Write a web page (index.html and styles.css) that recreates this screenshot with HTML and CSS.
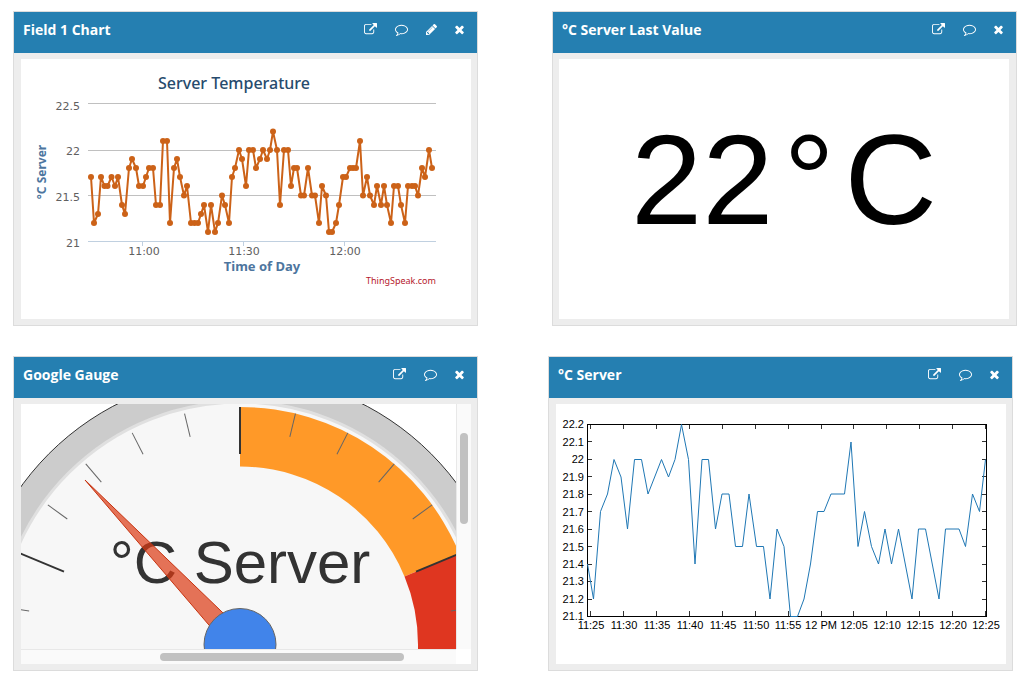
FILE: index.html
```html
<!DOCTYPE html>
<html lang="en">
<head>
<meta charset="utf-8">
<title>Server Temperature Channel</title>
<link rel="stylesheet" href="styles.css">
</head>
<body>
<svg class="sprite" aria-hidden="true">
  <symbol id="external" viewBox="0 0 1792 1792"><path d="M1408 928v320q0 119-84.5 203.5t-203.5 84.5h-832q-119 0-203.5-84.5t-84.5-203.5v-832q0-119 84.5-203.5t203.5-84.5h704q14 0 23 9t9 23v64q0 14-9 23t-23 9h-704q-66 0-113 47t-47 113v832q0 66 47 113t113 47h832q66 0 113-47t47-113v-320q0-14 9-23t23-9h64q14 0 23 9t9 23zm384-864v512q0 26-19 45t-45 19-45-19l-176-176-652 652q-10 10-23 10t-23-10l-114-114q-10-10-10-23t10-23l652-652-176-176q-19-19-19-45t19-45 45-19h512q26 0 45 19t19 45z"/></symbol>
  <symbol id="comment" viewBox="0 0 1792 1792"><path d="M896 384q-204 0-381.5 69.5t-282 187.5-104.5 255q0 112 71.5 213.5t201.5 175.5l87 50-27 96q-24 91-70 172 152-63 275-171l43-38 57 6q69 8 130 8 204 0 381.5-69.5t282-187.5 104.5-255-104.5-255-282-187.5-381.5-69.5zm896 512q0 174-120 321.5t-326 233-450 85.5q-70 0-145-8-198 175-460 242-49 14-114 22h-5q-15 0-27-10.5t-16-27.5v-1q-3-4-.5-12t2-10 4.5-9.5l6-9 7-8.5 8-9q7-8 31-34.5t34.5-38 31-39.5 32.5-51 27-59 26-76q-157-89-247.5-220t-90.5-281q0-174 120-321.5t326-233 450-85.5 450 85.5 326 233 120 321.5z"/></symbol>
  <symbol id="pencil" viewBox="128 0 1515 1792"><path d="M491 1536l91-91-235-235-91 91v107h128v128h107zm523-928q0-22-22-22-10 0-17 7l-542 542q-7 7-7 17 0 22 22 22 10 0 17-7l542-542q7-7 7-17zm-54-192l416 416-832 832h-416v-416zm683 96q0 53-37 90l-166 166-416-416 166-165q36-38 90-38 53 0 91 38l235 234q37 39 37 91z"/></symbol>
  <symbol id="close" viewBox="302 0 1188 1792"><path d="M1490 1322q0 40-28 68l-136 136q-28 28-68 28t-68-28l-294-294-294 294q-28 28-68 28t-68-28l-136-136q-28-28-28-68t28-68l294-294-294-294q-28-28-28-68t28-68l136-136q28-28 68-28t68 28l294 294 294-294q28-28 68-28t68 28l136 136q28 28 28 68t-28 68l-294 294 294 294q28 28 28 68z"/></symbol>
</svg>
<main class="board">
  <div class="row">
    <section class="panel">
      <header class="panel-head">
        <h2 class="panel-title">Field 1 Chart</h2>
        <button class="tool" type="button" aria-label="Open in new window"><svg class="icon"><use href="#external"/></svg></button>
        <button class="tool" type="button" aria-label="Comment"><svg class="icon"><use href="#comment"/></svg></button>
        <button class="tool" type="button" aria-label="Edit"><svg class="icon icon-pencil"><use href="#pencil"/></svg></button>
        <button class="tool" type="button" aria-label="Close"><svg class="icon icon-close"><use href="#close"/></svg></button>
      </header>
      <div class="panel-body">
        <svg class="chart field-chart" viewBox="0 0 450 260">
          <defs><marker id="dot" markerUnits="userSpaceOnUse" markerWidth="8" markerHeight="8" refX="4" refY="4"><circle cx="4" cy="4" r="3" fill="#cc6218"/></marker></defs>
          <text class="chart-title" x="213" y="30" text-anchor="middle">Server Temperature</text>
          <path class="grid-line" d="M67 44.5H415M67 91.5H415M67 136.5H415"/>
          <path class="axis-line" d="M67 182.5H415M121.500 182V187M222.500 182V187M323.500 182V187"/>
          <g class="tick-label" text-anchor="end">
            <text x="59" y="51">22.5</text><text x="59" y="96">22</text><text x="59" y="142">21.5</text><text x="59" y="188">21</text>
          </g>
          <g class="tick-label" text-anchor="middle">
            <text x="123" y="196">11:00</text><text x="223" y="196">11:30</text><text x="324" y="196">12:00</text>
          </g>
          <text class="axis-title" transform="translate(25 113) rotate(-90)" text-anchor="middle">°C Server</text>
          <text class="axis-title axis-title-x" x="241" y="212" text-anchor="middle">Time of Day</text>
          <a href="https://thingspeak.com"><text class="credit" x="415" y="225" text-anchor="end">ThingSpeak.com</text></a>
          <polyline class="field-line" points="70,118 73,164 77,155 80,118 83.500,127 86.500,127 90.500,118 94,127 97,118 101,146 104,155 108,109 111,100 115,109 118,127 122,127 125,118 128,109 132,109 135,146 139,146 142,82 146,82 149,164 153,109 156,100 159,118 163,136.500 166,127 170,164 173.500,164 177,164 180,155 183,146 187,173 190,146 194,173 197,164 201,136.500 204,146 208,164 211,118 214,109 218,91 221,100 225,127 228,91 232,91 235,109 239,100 242,91 246,100 249,91 252,72.500 256,91 259,146 263,91 267,91 270,127 273,109 276,109 280,136.500 283,136.500 287,109 291,136.500 294,136.500 298,164 301,127 305,136.500 308,173 311,173 315,164 318,146 322,118 325,118 329,109 332,109 335,109 339,82 342,136.500 346,118 349,136.500 353,146 356,127 360,146 363,127 366,146 370,164 373,127 377,127 380,146 384,164 387,127 391,127 394,127 397,136.500 401,109 404,118 408,91 411,109"/>
        </svg>
      </div>
    </section>
    <section class="panel panel-value">
      <header class="panel-head">
        <h2 class="panel-title">°C Server Last Value</h2>
        <button class="tool" type="button" aria-label="Open in new window"><svg class="icon"><use href="#external"/></svg></button>
        <button class="tool" type="button" aria-label="Comment"><svg class="icon"><use href="#comment"/></svg></button>
        <button class="tool" type="button" aria-label="Close"><svg class="icon icon-close"><use href="#close"/></svg></button>
      </header>
      <div class="panel-body">
        <div class="last-value"><p class="reading">22<span class="degree">°</span>C</p></div>
      </div>
    </section>
  </div>
  <div class="row row-lower">
    <section class="panel">
      <header class="panel-head">
        <h2 class="panel-title">Google Gauge</h2>
        <button class="tool" type="button" aria-label="Open in new window"><svg class="icon"><use href="#external"/></svg></button>
        <button class="tool" type="button" aria-label="Comment"><svg class="icon"><use href="#comment"/></svg></button>
        <button class="tool" type="button" aria-label="Close"><svg class="icon icon-close"><use href="#close"/></svg></button>
      </header>
      <div class="panel-body">
        <div class="gauge-frame">
          <svg class="chart gauge" viewBox="0 0 435 245">
            <circle cx="219" cy="240.500" r="270" fill="#ccc" stroke="#333" stroke-width="1"/>
            <circle cx="219" cy="240.500" r="242.500" fill="#f7f7f7" stroke="#e0e0e0" stroke-width="3"/>
            <g transform="translate(219 240.500)">
              <path fill="#ff9928" d="M0-237.500A237.500 237.500 0 0 1 219.400-90.900L164.500-68.100A178 178 0 0 0 0-178Z"/>
              <path fill="#df3620" d="M219.400-90.900A237.500 237.500 0 0 1 237.500 0V30H178V0A178 178 0 0 0 164.500-68.100Z"/>
              <g stroke="#333" stroke-width="2">
                <path d="M0-237.500V-190.500"/>
                <path d="M0-237.500V-190.500" transform="rotate(-67.500)"/>
                <path d="M0-237.500V-190.500" transform="rotate(67.500)"/>
              </g>
              <g stroke="#666" stroke-width="1">
                <path d="M0-237.500V-213.500" transform="rotate(-81)"/>
                <path d="M0-237.500V-213.500" transform="rotate(-54)"/>
                <path d="M0-237.500V-213.500" transform="rotate(-40.500)"/>
                <path d="M0-237.500V-213.500" transform="rotate(-27)"/>
                <path d="M0-237.500V-213.500" transform="rotate(-13.500)"/>
                <path d="M0-237.500V-213.500" transform="rotate(13.500)"/>
                <path d="M0-237.500V-213.500" transform="rotate(27)"/>
                <path d="M0-237.500V-213.500" transform="rotate(40.500)"/>
                <path d="M0-237.500V-213.500" transform="rotate(54)"/>
                <path d="M0-237.500V-213.500" transform="rotate(81)"/>
              </g>
            </g>
            <text class="gauge-label" x="219" y="179" text-anchor="middle">°C Server</text>
            <path d="M64 76L227 233L211 248Z" fill="#dc3912" fill-opacity=".7" stroke="#c63310" stroke-width="1"/>
            <circle cx="219" cy="240.500" r="36" fill="#4184ea" stroke="#666" stroke-width="1"/>
          </svg>
          <div class="track track-y"><span class="thumb"></span></div>
          <div class="track track-x"><span class="thumb"></span></div>
        </div>
      </div>
    </section>
    <section class="panel">
      <header class="panel-head">
        <h2 class="panel-title">°C Server</h2>
        <button class="tool" type="button" aria-label="Open in new window"><svg class="icon"><use href="#external"/></svg></button>
        <button class="tool" type="button" aria-label="Comment"><svg class="icon"><use href="#comment"/></svg></button>
        <button class="tool" type="button" aria-label="Close"><svg class="icon icon-close"><use href="#close"/></svg></button>
      </header>
      <div class="panel-body">
        <svg class="chart" viewBox="0 0 450 260">
          <path class="plot-ticks" d="M34.500 21v4m0 187v-5M67.500 21v4m0 187v-5M100.500 21v4m0 187v-5M133.500 21v4m0 187v-5M166.500 21v4m0 187v-5M199.500 21v4m0 187v-5M232.500 21v4m0 187v-5M265.500 21v4m0 187v-5M297.500 21v4m0 187v-5M330.500 21v4m0 187v-5M363.500 21v4m0 187v-5M396.500 21v4m0 187v-5M429.500 21v4m0 187v-5M32 37.500h4m395 0h-5M32 55.500h4m395 0h-5M32 72.500h4m395 0h-5M32 90.500h4m395 0h-5M32 107.500h4m395 0h-5M32 125.500h4m395 0h-5M32 142.500h4m395 0h-5M32 160.500h4m395 0h-5M32 177.500h4m395 0h-5M32 195.500h4m395 0h-5"/>
          <rect class="plot-box" x="31.500" y="20.500" width="399" height="192"/>
          <g class="plot-label" text-anchor="end">
            <text x="28" y="24">22.2</text><text x="28" y="42">22.1</text><text x="28" y="59">22</text><text x="28" y="77">21.9</text><text x="28" y="94">21.8</text><text x="28" y="112">21.7</text><text x="28" y="129">21.6</text><text x="28" y="147">21.5</text><text x="28" y="164">21.4</text><text x="28" y="181">21.3</text><text x="28" y="199">21.2</text><text x="28" y="216">21.1</text>
          </g>
          <g class="plot-label" text-anchor="middle">
            <text x="35" y="225">11:25</text><text x="68" y="225">11:30</text><text x="101" y="225">11:35</text><text x="134" y="225">11:40</text><text x="167" y="225">11:45</text><text x="200" y="225">11:50</text><text x="232" y="225">11:55</text><text x="265" y="225">12 PM</text><text x="298" y="225">12:05</text><text x="331" y="225">12:10</text><text x="364" y="225">12:15</text><text x="397" y="225">12:20</text><text x="430" y="225">12:25</text>
          </g>
          <polyline class="plot-line" points="31.500,160 37.500,195 44.500,107.500 51.500,90 58,55.500 65,73 71.500,125 78.500,55.500 85.500,55.500 92,90 105.500,55.500 112.500,73 119,55.500 125.500,20.500 132.500,55.500 139,160 146,55.500 152.500,55.500 159.500,125 166,90 173,90 179.500,142.500 186.500,142.500 193,90 200.500,142.500 207.500,142.500 214,195 221,125 228,142.500 234.500,212.500 241.500,212.500 248,195 254.500,160 261.500,107.500 268,107.500 275,90 288.500,90 295,38 302,142.500 308.500,107.500 315.500,142.500 322.500,160 329,125 335.500,160 342.500,125 356,195 362.500,125 369.500,125 383,195 389.500,125 403,125 409.500,142.500 416.500,90 423.500,107.500 429.500,55.500"/>
        </svg>
      </div>
    </section>
  </div>
</main>
</body>
</html>
```
FILE: styles.css
```css
* { box-sizing: border-box; }

body {
  margin: 0;
  background: #fff;
  font-family: "Open Sans", "Noto Sans", sans-serif;
}

.sprite {
  position: absolute;
  width: 0;
  height: 0;
}

.board {
  display: flex;
  flex-direction: column;
  gap: 30px;
  padding: 11px 0 15px 13px;
}

.row {
  display: flex;
  gap: 74px;
  padding-right: 14px;
}

.row-lower {
  gap: 70px;
  padding-right: 18px;
}

.panel {
  flex: 1 1 0;
  min-width: 0;
  border: 1px solid #dcdcdc;
  background: #ededed;
}

.panel-head {
  display: flex;
  align-items: center;
  gap: 18px;
  height: 41px;
  padding: 0 13px 6px 9px;
  background: #257fb1;
  color: #fff;
}

.panel-title {
  flex: 1;
  margin: 0;
  font-size: 14px;
  line-height: 20px;
  font-weight: 700;
}

.tool {
  display: flex;
  padding: 0;
  border: 0;
  background: none;
  color: inherit;
  cursor: pointer;
}

.icon {
  display: block;
  width: 13px;
  height: 13px;
  fill: currentColor;
}

.icon-pencil { width: 11px; }
.icon-close { width: 9px; }

.panel-body { padding: 6px 6px 6px 7px; }
.panel-value .panel-body { padding: 6px 7px 6px 6px; }

.chart {
  display: block;
  width: 100%;
  height: auto;
  background: #fff;
}

.field-chart { font-family: "Noto Sans", sans-serif; }

.chart-title {
  font-size: 16px;
  font-weight: 500;
  fill: #274b6d;
}

.tick-label {
  font-family: "DejaVu Sans", sans-serif;
  font-size: 11px;
  fill: #606060;
}

.axis-title {
  font-size: 12px;
  font-weight: 700;
  fill: #4d759e;
}

.axis-title-x { font-size: 13px; }

.credit {
  font-size: 9px;
  fill: #b5182c;
}

.grid-line {
  fill: none;
  stroke: #c0c0c0;
}

.axis-line {
  fill: none;
  stroke: #c0d0e0;
}

.field-line {
  fill: none;
  stroke: #cc6218;
  stroke-width: 2;
  stroke-linejoin: round;
  marker: url(#dot);
}

.last-value {
  display: flex;
  align-items: center;
  justify-content: center;
  aspect-ratio: 450 / 260;
  padding-bottom: 18px;
  background: #fff;
}

.reading {
  margin: 0;
  font-family: "Liberation Sans", Arial, sans-serif;
  font-size: 128px;
  line-height: 140px;
  color: #000;
}

.degree { padding: 0 10px; }

.gauge-frame {
  display: grid;
  grid-template-columns: minmax(0, 1fr) 15px;
  grid-template-rows: auto 15px;
  background: #fff;
}

.gauge-label {
  font-family: "Liberation Sans", Arial, sans-serif;
  font-size: 60px;
  fill: #333;
}

.track {
  display: grid;
  background: #fafafa;
}

.track-y {
  grid-template-rows: 29fr 91fr 125fr;
  padding: 0 3px;
  border-left: 1px solid #e8e8e8;
}

.track-x {
  grid-template-columns: 139fr 244fr 52fr;
  padding: 3px 0;
  border-top: 1px solid #e8e8e8;
}

.thumb {
  border-radius: 4px;
  background: #c1c1c1;
}

.track-y .thumb { grid-row: 2; }
.track-x .thumb { grid-column: 2; }

.plot-box {
  fill: none;
  stroke: #000;
}

.plot-ticks {
  fill: none;
  stroke: #333;
}

.plot-label {
  font-family: "Liberation Sans", Arial, sans-serif;
  font-size: 11px;
  fill: #000;
}

.plot-line {
  fill: none;
  stroke: #1f77b4;
}
```
